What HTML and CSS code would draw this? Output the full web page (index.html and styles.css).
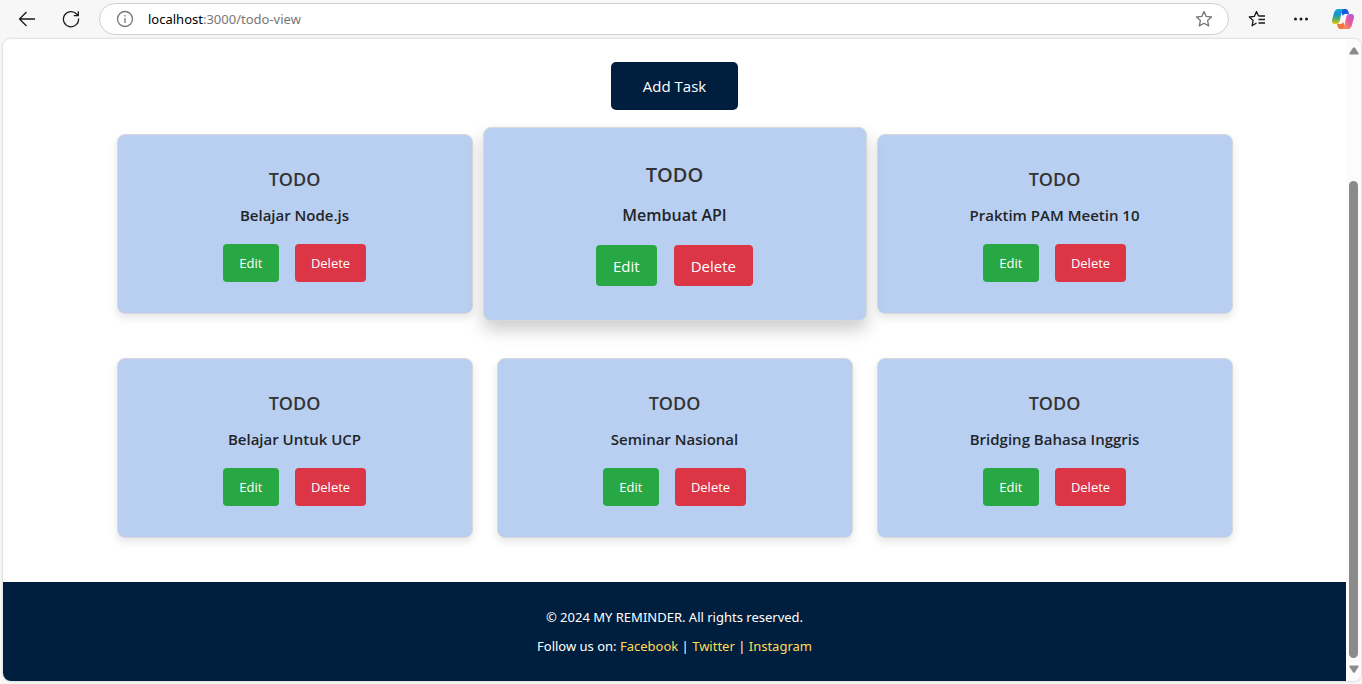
FILE: index.html
```html
<!DOCTYPE html>
<html lang="id">
<head>
<meta charset="utf-8">
<title>My Reminder</title>
<link rel="stylesheet" href="styles.css">
</head>
<body>
<header class="toolbar">
  <button class="tool" aria-label="Back"><svg width="18" height="18" viewBox="0 0 18 18"><path d="M17 9H1.5M8.5 2L1.5 9l7 7"/></svg></button>
  <button class="tool" aria-label="Reload"><svg width="18" height="18" viewBox="0 0 18 18"><path d="M16.6 8.5A7.6 7.6 0 1 1 14.6 4L16.200 5.500M16.300 1.200V5.700H11.800"/></svg></button>
  <div class="address">
    <svg class="muted" width="18" height="18" viewBox="0 0 18 18"><circle cx="9" cy="9" r="7.500"/><path d="M9 8v5M9 5v1.500"/></svg>
    <div class="url" role="textbox" aria-label="Address"><span class="host">localhost</span>:3000/todo-view</div>
    <button class="tool tool-small muted" aria-label="Add to favorites"><svg width="18" height="18" viewBox="0 0 18 18"><path d="M9 1.500l2.200 4.900 5.300.6-3.900 3.600 1.100 5.300L9 13.200l-4.700 2.700 1.100-5.300L1.500 7l5.300-.6z"/></svg></button>
  </div>
  <button class="tool" aria-label="Favorites"><svg width="18" height="18" viewBox="0 0 18 18"><path d="M8.500 13l-4.400 2.700 1-5.200L1.300 7l5-.6 2.200-4.900 2 4.400M10.500 6H17M10.500 9.500H17M10.500 13H17"/></svg></button>
  <button class="tool" aria-label="Settings and more"><svg class="solid" width="18" height="18" viewBox="0 0 18 18"><circle cx="3.500" cy="9" r="1.500"/><circle cx="9" cy="9" r="1.500"/><circle cx="14.500" cy="9" r="1.500"/></svg></button>
  <button class="tool copilot" aria-label="Copilot"><svg class="plain" width="24" height="22" viewBox="0 0 24 22">
    <defs>
      <linearGradient id="cool" x1="0" y1="0" x2="0" y2="1"><stop offset="0" stop-color="#12a5e8"/><stop offset=".4" stop-color="#1694c4"/><stop offset=".7" stop-color="#5cb45c"/><stop offset="1" stop-color="#f2c80a"/></linearGradient>
      <linearGradient id="warm" x1="1" y1="0" x2="0" y2="1"><stop offset="0" stop-color="#a45bee"/><stop offset=".5" stop-color="#ee5a94"/><stop offset="1" stop-color="#ffa04a"/></linearGradient>
      <linearGradient id="deep" x1="0" y1="0" x2="1" y2="1"><stop offset="0" stop-color="#1b4cdb"/><stop offset="1" stop-color="#1d66ea"/></linearGradient>
    </defs>
    <path fill="url(#deep)" d="M9 1h5.500c1.500 0 2.300.8 2.700 2l.9 3h-3.600c-1.500 0-2.200.8-2.700 2z"/>
    <path fill="url(#cool)" d="M7 1h6c-1.300.3-1.900 1.400-2.300 2.800L8.700 13c-.5 1.900-1.600 3-3.200 3H3.600C1.200 16 .6 13.800 1.200 11.500l2-7C3.900 2.200 5 1 7 1z"/>
    <path fill="#f4743b" d="M15 21H9.500c-1.500 0-2.300-.8-2.700-2l-.9-3h3.600c1.500 0 2.200-.8 2.700-2z"/>
    <path fill="url(#warm)" d="M17 21h-6c1.300-.3 1.900-1.400 2.300-2.800L15.300 9c.5-1.900 1.600-3 3.200-3h1.900c2.400 0 3 2.200 2.400 4.500l-2 7C20.100 19.800 19 21 17 21z"/>
  </svg></button>
</header>
<div class="viewport">
  <div class="page">
    <main class="content">
      <button class="add">Add Task</button>
      <section class="grid">
        <article class="card"><h2 class="title">TODO</h2><p class="task">Belajar Node.js</p><div class="actions"><button class="btn edit">Edit</button><button class="btn delete">Delete</button></div></article>
        <article class="card raised"><h2 class="title">TODO</h2><p class="task">Membuat API</p><div class="actions"><button class="btn edit">Edit</button><button class="btn delete">Delete</button></div></article>
        <article class="card"><h2 class="title">TODO</h2><p class="task">Praktim PAM Meetin 10</p><div class="actions"><button class="btn edit">Edit</button><button class="btn delete">Delete</button></div></article>
        <article class="card"><h2 class="title">TODO</h2><p class="task">Belajar Untuk UCP</p><div class="actions"><button class="btn edit">Edit</button><button class="btn delete">Delete</button></div></article>
        <article class="card"><h2 class="title">TODO</h2><p class="task">Seminar Nasional</p><div class="actions"><button class="btn edit">Edit</button><button class="btn delete">Delete</button></div></article>
        <article class="card"><h2 class="title">TODO</h2><p class="task">Bridging Bahasa Inggris</p><div class="actions"><button class="btn edit">Edit</button><button class="btn delete">Delete</button></div></article>
      </section>
    </main>
    <footer class="footer">
      <p>© 2024 MY REMINDER. All rights reserved.</p>
      <p>Follow us on: <a href="#">Facebook</a> | <a href="#">Twitter</a> | <a href="#">Instagram</a></p>
    </footer>
  </div>
  <div class="scrollbar" aria-hidden="true">
    <svg width="10" height="8" viewBox="0 0 10 8"><path d="M4 .8Q5-.4 6 .8L9.600 6.200Q10 7.500 8.800 7.500H1.200Q0 7.500.4 6.200z"/></svg>
    <div class="track"><div class="thumb"></div></div>
    <svg width="10" height="8" viewBox="0 0 10 8"><path d="M4 7.200Q5 8.400 6 7.200L9.600 1.800Q10 .5 8.800.5H1.200Q0 .5.4 1.800z"/></svg>
  </div>
</div>
</body>
</html>
```

FILE: styles.css
```css
* { box-sizing: border-box; }
body {
  margin: 0;
  min-height: 100vh;
  display: flex;
  flex-direction: column;
  padding: 0 1px 3px 3px;
  background: #f7f7f7;
  color: #212529;
  font-family: "Segoe UI", "Open Sans", "Noto Sans", sans-serif;
}
button { font-family: inherit; border: 0; cursor: pointer; }
h2, p { margin: 0; }

.toolbar {
  display: flex;
  align-items: center;
  padding: 3px 0 4px 2px;
}
.tool {
  display: flex;
  align-items: center;
  justify-content: center;
  width: 44px;
  height: 32px;
  padding: 0;
  background: none;
}
.tool-small { width: 18px; }
.toolbar svg { fill: none; stroke: #1a1a1a; stroke-width: 1.3; stroke-linejoin: round; }
.toolbar .muted, .toolbar .muted svg { stroke: #767676; }
.toolbar .solid { fill: #1a1a1a; stroke: none; }
.toolbar .plain { stroke: none; }
.copilot { width: 40px; margin-right: -2px; }
.address {
  flex: 1;
  display: flex;
  align-items: center;
  gap: 14px;
  height: 32px;
  margin: 0 6px;
  padding: 0 15px 0 16px;
  border: 1px solid #d0d0d0;
  border-radius: 16px;
  background: #fff;
}
.url { flex: 1; color: #767676; font-family: "Segoe UI", "Noto Sans", sans-serif; font-size: 13px; line-height: 20px; }
.host { color: #000; }

.viewport {
  flex: 1;
  display: flex;
  overflow: hidden;
  border-radius: 8px;
  background: #fff;
  box-shadow: 0 0 2px 1px #dedede;
}
.page { flex: 1; display: flex; flex-direction: column; }
.content {
  flex: 1;
  display: flex;
  flex-direction: column;
  align-items: center;
  gap: 24px;
  padding: 23px 24px 44px;
}
.add {
  height: 48px;
  padding: 0 32px;
  border-radius: 5px;
  background: #001f3f;
  color: #fff;
  font-size: 15px;
}
.grid {
  display: grid;
  grid-template-columns: repeat(3, 1fr);
  gap: 44px 24px;
  width: 100%;
  max-width: 1116px;
}
.card {
  display: flex;
  flex-direction: column;
  align-items: center;
  padding: 32px 24px 31px;
  border: 1px solid #d9d9d9;
  border-radius: 8px;
  background: #b9cff1;
  box-shadow: 0 4px 8px rgba(0, 0, 0, .1);
}
.title { margin-bottom: 12px; color: #333; font-size: 18px; font-weight: 600; line-height: 24px; }
.task { margin-bottom: 17px; font-size: 15px; font-weight: 600; line-height: 24px; }
.actions { display: flex; gap: 16px; }
.btn {
  min-width: 56px;
  height: 38px;
  padding: 0 16px;
  border-radius: 4px;
  color: #fff;
  font-size: 13px;
}
.edit { background: #28a745; }
.delete { background: #dc3545; }

.raised {
  z-index: 1;
  margin: -7px -14px;
  padding: 34px 24px;
  box-shadow: 0 9px 17px rgba(0, 0, 0, .2);
}
.raised .title { margin-bottom: 14px; font-size: 20px; line-height: 26px; }
.raised .task { margin-bottom: 17px; font-size: 16px; line-height: 26px; }
.raised .actions { gap: 17px; }
.raised .btn { height: 41px; padding: 0 17px; font-size: 15px; }

.footer {
  display: flex;
  flex-direction: column;
  align-items: center;
  gap: 8px;
  padding: 25px 24px 24px;
  background: #001f3f;
  color: #fff;
  font-family: "Segoe UI", "Noto Sans", sans-serif;
  font-size: 13px;
  line-height: 21px;
}
.footer a { color: #ffdd57; text-decoration: none; }

.scrollbar {
  display: flex;
  flex-direction: column;
  align-items: center;
  gap: 7px;
  width: 15px;
  padding: 8px 0;
  background: #fcfcfc;
}
.scrollbar svg { fill: #8b8b8b; }
.track { flex: 1; display: flex; align-items: flex-end; }
.thumb { width: 9px; height: 80%; border-radius: 5px; background: #8b8b8b; }
```
